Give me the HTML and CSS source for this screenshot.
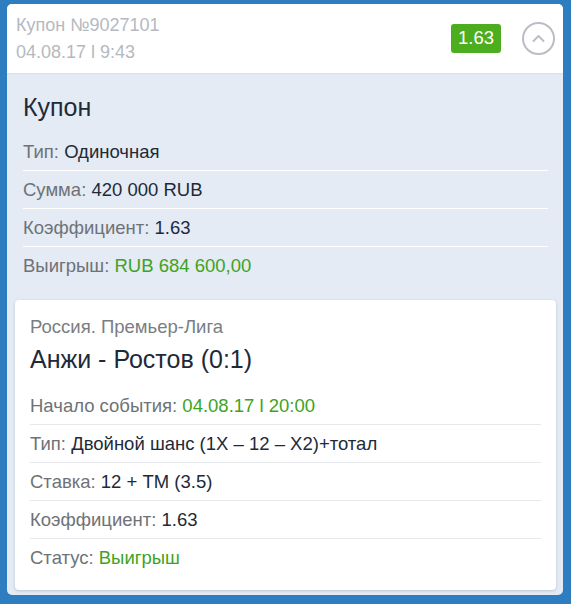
FILE: index.html
```html
<!DOCTYPE html>
<html lang="ru">
<head>
<meta charset="utf-8">
<link rel="stylesheet" href="styles.css">
</head>
<body>
<div class="page">
  <div class="coupon">
    <div class="head">
      <div class="head-info">
        <div class="head-title">Купон №9027101</div>
        <div class="head-date">04.08.17 l 9:43</div>
      </div>
      <div class="badge">1.63</div>
      <div class="toggle">
        <svg width="33" height="33" viewBox="0 0 33 33"><circle cx="16.5" cy="16.5" r="15.5" fill="none" stroke="#b9bdc4" stroke-width="2"/><path d="M11.5 19 L16.5 14 L21.5 19" fill="none" stroke="#b9bdc4" stroke-width="2" stroke-linecap="round" stroke-linejoin="round"/></svg>
      </div>
    </div>
    <div class="body">
      <div class="summary">
        <div class="summary-title">Купон</div>
        <div class="row"><span class="label">Тип:</span> <span class="value">Одиночная</span></div>
        <div class="row"><span class="label">Сумма:</span> <span class="value">420 000 RUB</span></div>
        <div class="row"><span class="label">Коэффициент:</span> <span class="value">1.63</span></div>
        <div class="row"><span class="label">Выигрыш:</span> <span class="value green">RUB 684 600,00</span></div>
      </div>
      <div class="event">
        <div class="league">Россия. Премьер-Лига</div>
        <div class="match">Анжи - Ростов (0:1)</div>
        <div class="erows">
          <div class="row erow"><span class="label">Начало события:</span> <span class="value green">04.08.17 l 20:00</span></div>
          <div class="row erow"><span class="label">Тип:</span> <span class="value">Двойной шанс (1X – 12 – X2)+тотал</span></div>
          <div class="row erow"><span class="label">Ставка:</span> <span class="value">12 + ТМ (3.5)</span></div>
          <div class="row erow"><span class="label">Коэффициент:</span> <span class="value">1.63</span></div>
          <div class="row erow"><span class="label">Статус:</span> <span class="value green">Выигрыш</span></div>
        </div>
      </div>
    </div>
  </div>
</div>
</body>
</html>
```
FILE: styles.css
```css
* { box-sizing: border-box; }
html, body { margin: 0; padding: 0; }
body {
  background: #2e7dc1;
  font-family: "Liberation Sans", Arial, sans-serif;
  width: 571px;
  height: 604px;
  overflow: hidden;
}
.page {
  padding: 4px 8px 8px 7px;
}
.coupon {
  background: #e4ebf4;
  border-radius: 5px;
  overflow: hidden;
}
.head {
  background: #ffffff;
  height: 70px;
  display: flex;
  align-items: center;
  padding: 0 8px 0 9px;
  border-bottom: 1px solid #d9e0ea;
}
.head-info {
  flex: 1;
  color: #b5b9bf;
  font-size: 18px;
  line-height: 27px;
  padding-top: 1px;
}
.badge {
  background: #4cae1f;
  color: #fff;
  font-size: 18.5px;
  border-radius: 3px;
  width: 50px;
  height: 29px;
  display: flex;
  align-items: center;
  justify-content: center;
  margin-right: 21px;
  margin-top: -1px;
}
.toggle {
  width: 33px;
  height: 33px;
}
.toggle svg { display: block; }
.body {
  padding: 0 0 5px 0;
}
.summary {
  padding: 16px 15px 0 16px;
}
.summary-title {
  font-size: 25px;
  line-height: 34px;
  color: #1e2a38;
  margin-bottom: 9px;
}
.row {
  height: 38px;
  line-height: 37px;
  font-size: 18.5px;
  border-bottom: 1px solid #ffffff;
  white-space: nowrap;
}
.row:last-child { border-bottom: none; height: 37px; }
.label { color: #6e7277; }
.value { color: #1e2a38; }
.green { color: #3ea322; }
.event {
  background: #ffffff;
  margin: 16px 7px 0 8px;
  border-radius: 4px;
  box-shadow: 0 1px 3px rgba(60, 80, 110, 0.25);
  padding: 15px 15px 14px 15px;
}
.league {
  font-size: 18.5px;
  line-height: 24px;
  color: #7a7e83;
}
.match {
  font-size: 25px;
  line-height: 32px;
  color: #1e2a38;
  margin-top: 4px;
  margin-bottom: 12px;
}
.erow {
  border-bottom: 1px solid #e6e8eb;
}
```
